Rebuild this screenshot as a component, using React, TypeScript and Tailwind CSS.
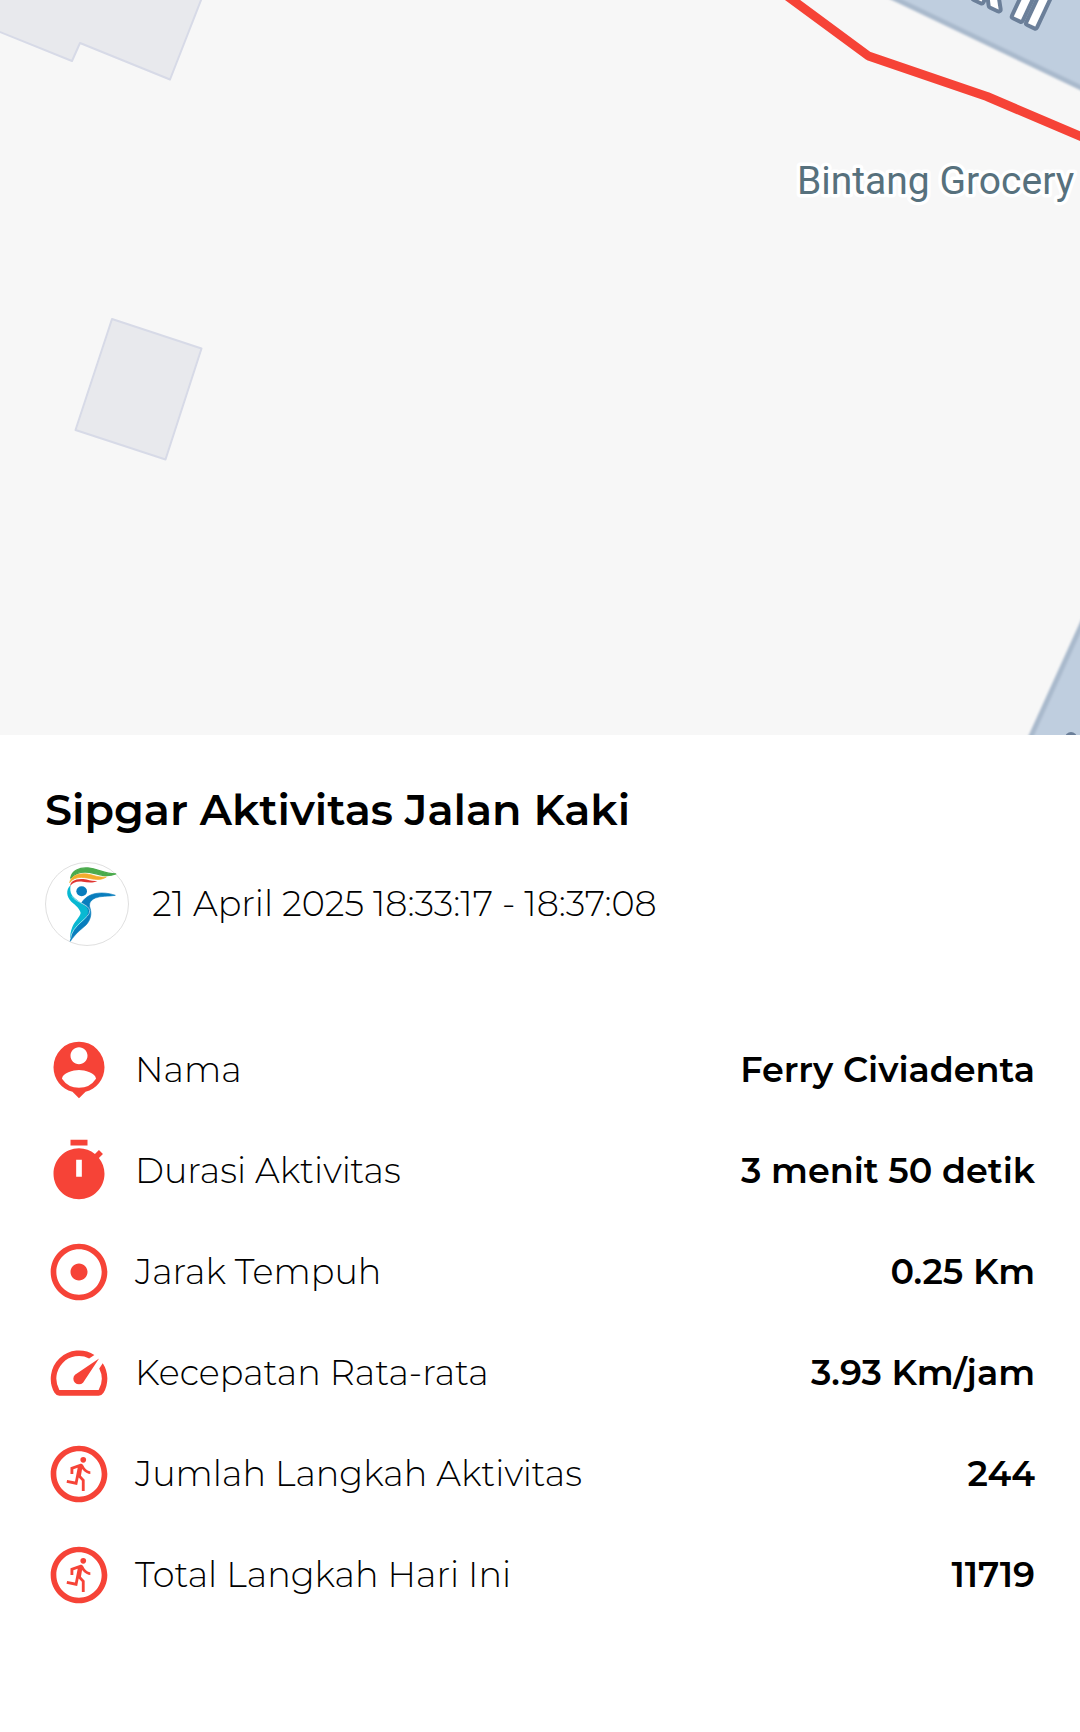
import type { ReactNode } from "react";
import { MdAdjust, MdOutlineRunCircle, MdPersonPin, MdSpeed } from "react-icons/md";

function MapView() {
  return (
    <svg
      className="block aspect-[1080/735] w-full bg-[#f7f7f7]"
      viewBox="0 0 1080 735"
      role="img"
      aria-label="Peta rute aktivitas"
    >
      <defs>
        <filter id="soft" x="-10%" y="-10%" width="120%" height="120%">
          <feGaussianBlur stdDeviation="1" />
        </filter>
      </defs>

      <g fill="#e8e9ed" stroke="#d7dae7" strokeWidth="2" strokeLinejoin="round">
        <path d="M-10 28L72 61L80 43L170 79.500L203 -5H-10Z" />
        <path d="M112 319L201.500 348.500L165.500 459.500L75.500 430Z" />
      </g>

      <g fill="#bfcedf" stroke="#a9b9cc" strokeWidth="5" filter="url(#soft)">
        <path d="M885 -6L1090 92V-20Z" />
        <path d="M1027 745L1090 606V745Z" />
      </g>

      <path
        d="M779 -10L868.500 56L987 96.500L1090 140.500"
        fill="none"
        stroke="#f64337"
        strokeWidth="9"
        strokeLinejoin="round"
      />

      <g
        fontFamily="Roboto, sans-serif"
        paintOrder="stroke"
        strokeLinejoin="round"
      >
        <text
          x="972"
          y="-3"
          transform="rotate(25 972 -3)"
          fontSize="54"
          fontWeight="700"
          fill="#ffffff"
          stroke="#6b7f99"
          strokeWidth="8"
        >
          k II
        </text>
        <text
          x="797"
          y="194"
          fontSize="39"
          fill="#57717d"
          stroke="#ffffff"
          strokeWidth="7"
        >
          Bintang Grocery
        </text>
      </g>
      <circle cx="1071" cy="738" r="6" fill="#6b7f99" />
    </svg>
  );
}

function Logo() {
  return (
    <svg className="size-[84px] shrink-0" viewBox="27 36 252 252" role="img" aria-label="Sipgar">
      <circle cx="153" cy="162" r="124.500" fill="#fff" stroke="#cfcfcf" strokeWidth="2" />
      <path d="M104 84C108 62 130 52 156 54C188 57 204 72 239 72C216 81 196 76 174 70C146 63 122 64 104 84Z" fill="#4bab4d" stroke="#4bab4d" strokeWidth="4" strokeLinejoin="round" />
      <path d="M101 98C104 78 128 68 154 72C174 75 188 84 211 81C192 93 174 88 153 84C130 80 112 83 101 98Z" fill="#f2ac2c" stroke="#f2ac2c" strokeWidth="2" />
      <path d="M103 108C102 94 118 85 142 87C158 88 166 95 184 93C168 101 154 97 140 95C121 93 110 98 103 108Z" fill="#df3532" />
      <ellipse cx="137" cy="124" rx="16" ry="15" fill="#087dbd" />
      <path d="M104 106C88 119 92 142 106 155C120 166 132 177 134 189C132 201 117 213 109 231C103 245 102 258 103 271C108 250 124 232 142 216C158 201 164 188 158 177C148 163 118 151 108 136C102 126 102 116 104 106Z" fill="#08b8d2" />
      <path d="M137 158C150 137 172 129 197 129C214 129 226 132 238 136C216 140 194 137 178 144C162 151 158 162 162 174C168 193 163 211 150 225C134 239 118 251 103 274C103 249 120 233 138 217C153 203 160 190 156 177C152 168 144 163 137 158Z" fill="#087dbd" stroke="#087dbd" strokeWidth="2" />
      <path d="M108 139C122 159 158 162 161 182C163 205 108 222 103 268" fill="none" stroke="#d8f1f8" strokeWidth="2" />
    </svg>
  );
}

function FilledTimer() {
  return (
    <svg className="size-full" viewBox="0 0 24 24" fill="currentColor" fillRule="evenodd">
      <path d="M9 1h6v2H9zM19.030 7.390l1.420-1.420-1.410-1.410-1.420 1.420C16.070 4.740 14.120 4 12 4c-4.970 0-9 4.030-9 9s4.020 9 9 9 9-4.030 9-9c0-2.120-.740-4.070-1.970-5.610zM11 8h2v6h-2z" />
    </svg>
  );
}

const rows: { label: string; value: string; icon: ReactNode }[] = [
  { label: "Nama", value: "Ferry Civiadenta", icon: <MdPersonPin className="size-full" /> },
  { label: "Durasi Aktivitas", value: "3 menit 50 detik", icon: <FilledTimer /> },
  { label: "Jarak Tempuh", value: "0.25 Km", icon: <MdAdjust className="size-full" /> },
  { label: "Kecepatan Rata-rata", value: "3.93 Km/jam", icon: <MdSpeed className="size-full" /> },
  { label: "Jumlah Langkah Aktivitas", value: "244", icon: <MdOutlineRunCircle className="size-full" /> },
  { label: "Total Langkah Hari Ini", value: "11719", icon: <MdOutlineRunCircle className="size-full" /> },
];

export default function App() {
  return (
    <main className="min-h-screen bg-white font-['Montserrat','Inter',sans-serif] text-black">
      <MapView />
      <section className="px-[45px] pt-12 pb-16">
        <h1 className="text-[43px] leading-[54px] font-semibold">Sipgar Aktivitas Jalan Kaki</h1>
        <div className="mt-[25px] flex items-center gap-[23px]">
          <Logo />
          <p className="text-[35px] leading-[46px] font-light">21 April 2025 18:33:17 - 18:37:08</p>
        </div>
        <dl className="mt-[90px] flex flex-col gap-[33px]">
          {rows.map((row) => (
            <div key={row.label} className="flex items-center justify-between text-[35px] leading-[46px]">
              <dt className="flex items-center gap-[22px] font-light">
                <span className="size-[68px] shrink-0 text-[#f64337]" aria-hidden="true">
                  {row.icon}
                </span>
                {row.label}
              </dt>
              <dd className="text-right font-semibold">{row.value}</dd>
            </div>
          ))}
        </dl>
      </section>
    </main>
  );
}
